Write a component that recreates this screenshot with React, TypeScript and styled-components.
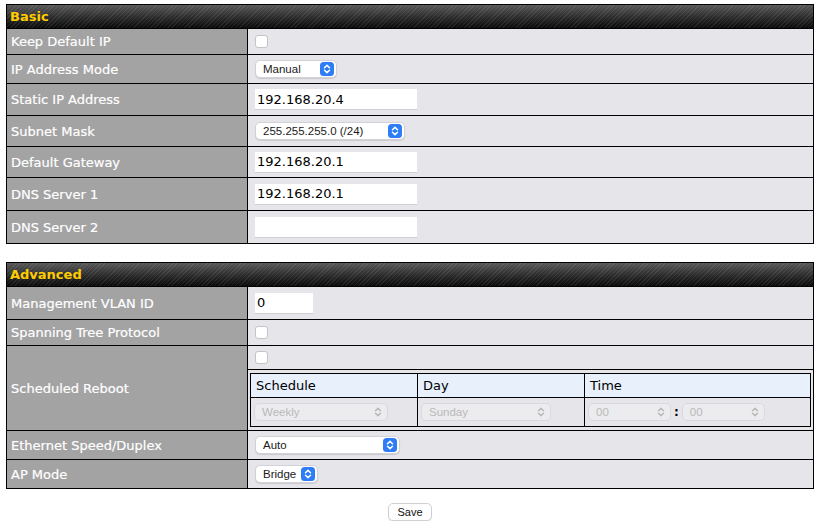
import React from "react";
import styled, { createGlobalStyle } from "styled-components";

const GlobalStyle = createGlobalStyle`
  body {
    margin: 0;
    background: #fff;
    font-family: "DejaVu Sans", Verdana, sans-serif;
  }
`;

const Page = styled.div`
  width: 808px;
  padding: 4px 0 0 6px;
  display: flex;
  flex-direction: column;
`;

const Section = styled.div`
  border: 1px solid #000;
  display: flex;
  flex-direction: column;
  & + & {
    margin-top: 18px;
  }
`;

const HeaderBar = styled.div`
  height: 23px;
  display: flex;
  align-items: center;
  padding-left: 3px;
  font-size: 13px;
  font-weight: bold;
  color: #ffcc00;
  background:
    repeating-linear-gradient(-45deg, rgba(255,255,255,0.08) 0 1px, transparent 1px 3px),
    linear-gradient(#585858, #2a2a2a 55%, #0a0a0a);
`;

const Row = styled.div<{ h: number }>`
  display: grid;
  grid-template-columns: 241px 1fr;
  height: ${(p) => p.h}px;
  border-top: 1px solid #000;
`;

const Label = styled.div`
  background: #a3a3a3;
  border-right: 1px solid #000;
  color: #fff;
  font-size: 13px;
  -webkit-text-stroke: 0.2px #fff;
  display: flex;
  align-items: center;
  padding-left: 4px;
`;

const Value = styled.div`
  background: #e6e6ea;
  display: flex;
  align-items: center;
  padding-left: 7px;
`;

const StackValue = styled.div`
  background: #e6e6ea;
  display: flex;
  flex-direction: column;
`;

const CheckLine = styled.div`
  height: 23px;
  display: flex;
  align-items: center;
  padding-left: 7px;
  border-bottom: 1px solid #000;
`;

const Check = styled.span`
  width: 11px;
  height: 11px;
  background: #fff;
  border: 1px solid #c4c4c4;
  border-radius: 3px;
  display: inline-block;
`;

const TextInput = styled.input<{ w: number }>`
  width: ${(p) => p.w}px;
  height: 21px;
  box-sizing: border-box;
  border: none;
  border-bottom: 1px solid #cfcfcf;
  background: #fff;
  padding: 0 2px;
  font-family: "DejaVu Sans", Verdana, sans-serif;
  font-size: 13px;
  color: #000;
  outline: none;
`;

const SelectBox = styled.div<{ w: number; disabled?: boolean }>`
  width: ${(p) => p.w}px;
  height: 18px;
  box-sizing: border-box;
  display: flex;
  align-items: center;
  justify-content: space-between;
  padding: 0 2px 0 7px;
  border-radius: 5px;
  background: ${(p) => (p.disabled ? "#ececee" : "#fff")};
  border: 1px solid ${(p) => (p.disabled ? "#dadade" : "#d2d2d6")};
  box-shadow: ${(p) => (p.disabled ? "none" : "0 1px 1px rgba(0,0,0,0.12)")};
  font-family: "Liberation Sans", Arial, sans-serif;
  font-size: 11.5px;
  color: ${(p) => (p.disabled ? "#b8b8b8" : "#1a1a1a")};
`;

const Stepper = ({ disabled }: { disabled?: boolean }) => (
  <svg width="14" height="14" viewBox="0 0 14 14">
    {!disabled && <rect x="0" y="0" width="14" height="14" rx="3.5" fill="#2f7df6" />}
    <path
      d="M4.5 5.8 L7 3.4 L9.5 5.8 M4.5 8.2 L7 10.6 L9.5 8.2"
      fill="none"
      stroke={disabled ? "#b8b8b8" : "#fff"}
      strokeWidth="1.5"
      strokeLinecap="round"
      strokeLinejoin="round"
    />
  </svg>
);

const Select = ({ w, text, disabled }: { w: number; text: string; disabled?: boolean }) => (
  <SelectBox w={w} disabled={disabled}>
    <span>{text}</span>
    <Stepper disabled={disabled} />
  </SelectBox>
);

const ScheduleTable = styled.div`
  margin: 3px 2px 0 2px;
  border: 1px solid #000;
  display: grid;
  grid-template-columns: 167px 167px 1fr;
`;

const ScheduleHead = styled.div<{ last?: boolean }>`
  height: 23px;
  background: #e8f0fc;
  border-right: ${(p) => (p.last ? "none" : "1px solid #000")};
  border-bottom: 1px solid #000;
  display: flex;
  align-items: center;
  padding-left: 5px;
  font-size: 13px;
  color: #000;
`;

const ScheduleCell = styled.div<{ last?: boolean }>`
  height: 28px;
  border-right: ${(p) => (p.last ? "none" : "1px solid #000")};
  display: flex;
  align-items: center;
  gap: 3px;
  padding-left: 3px;
`;

const Colon = styled.span`
  font-size: 12px;
  font-weight: bold;
  color: #000;
`;

const Footer = styled.div`
  display: flex;
  justify-content: center;
  margin-top: 14px;
`;

const SaveButton = styled.button`
  height: 18px;
  padding: 0 8px;
  border: 1px solid #d0d0d0;
  border-radius: 5px;
  background: #fff;
  box-shadow: 0 1px 1px rgba(0, 0, 0, 0.1);
  font-family: "Liberation Sans", Arial, sans-serif;
  font-size: 11px;
  color: #111;
`;

export default function App() {
  return (
    <>
      <GlobalStyle />
      <Page>
        <Section>
          <HeaderBar>Basic</HeaderBar>
          <Row h={25}>
            <Label>Keep Default IP</Label>
            <Value><Check /></Value>
          </Row>
          <Row h={28}>
            <Label>IP Address Mode</Label>
            <Value><Select w={82} text="Manual" /></Value>
          </Row>
          <Row h={31}>
            <Label>Static IP Address</Label>
            <Value><TextInput w={162} defaultValue="192.168.20.4" /></Value>
          </Row>
          <Row h={30}>
            <Label>Subnet Mask</Label>
            <Value><Select w={150} text="255.255.255.0 (/24)" /></Value>
          </Row>
          <Row h={30}>
            <Label>Default Gateway</Label>
            <Value><TextInput w={162} defaultValue="192.168.20.1" /></Value>
          </Row>
          <Row h={32}>
            <Label>DNS Server 1</Label>
            <Value><TextInput w={162} defaultValue="192.168.20.1" /></Value>
          </Row>
          <Row h={32}>
            <Label>DNS Server 2</Label>
            <Value><TextInput w={162} defaultValue="" /></Value>
          </Row>
        </Section>

        <Section>
          <HeaderBar>Advanced</HeaderBar>
          <Row h={32}>
            <Label>Management VLAN ID</Label>
            <Value><TextInput w={58} defaultValue="0" /></Value>
          </Row>
          <Row h={25}>
            <Label>Spanning Tree Protocol</Label>
            <Value><Check /></Value>
          </Row>
          <Row h={84}>
            <Label>Scheduled Reboot</Label>
            <StackValue>
              <CheckLine><Check /></CheckLine>
              <ScheduleTable>
                <ScheduleHead>Schedule</ScheduleHead>
                <ScheduleHead>Day</ScheduleHead>
                <ScheduleHead last>Time</ScheduleHead>
                <ScheduleCell><Select w={134} text="Weekly" disabled /></ScheduleCell>
                <ScheduleCell><Select w={130} text="Sunday" disabled /></ScheduleCell>
                <ScheduleCell last>
                  <Select w={83} text="00" disabled />
                  <Colon>:</Colon>
                  <Select w={83} text="00" disabled />
                </ScheduleCell>
              </ScheduleTable>
            </StackValue>
          </Row>
          <Row h={28}>
            <Label>Ethernet Speed/Duplex</Label>
            <Value><Select w={145} text="Auto" /></Value>
          </Row>
          <Row h={28}>
            <Label>AP Mode</Label>
            <Value><Select w={63} text="Bridge" /></Value>
          </Row>
        </Section>

        <Footer>
          <SaveButton>Save</SaveButton>
        </Footer>
      </Page>
    </>
  );
}
